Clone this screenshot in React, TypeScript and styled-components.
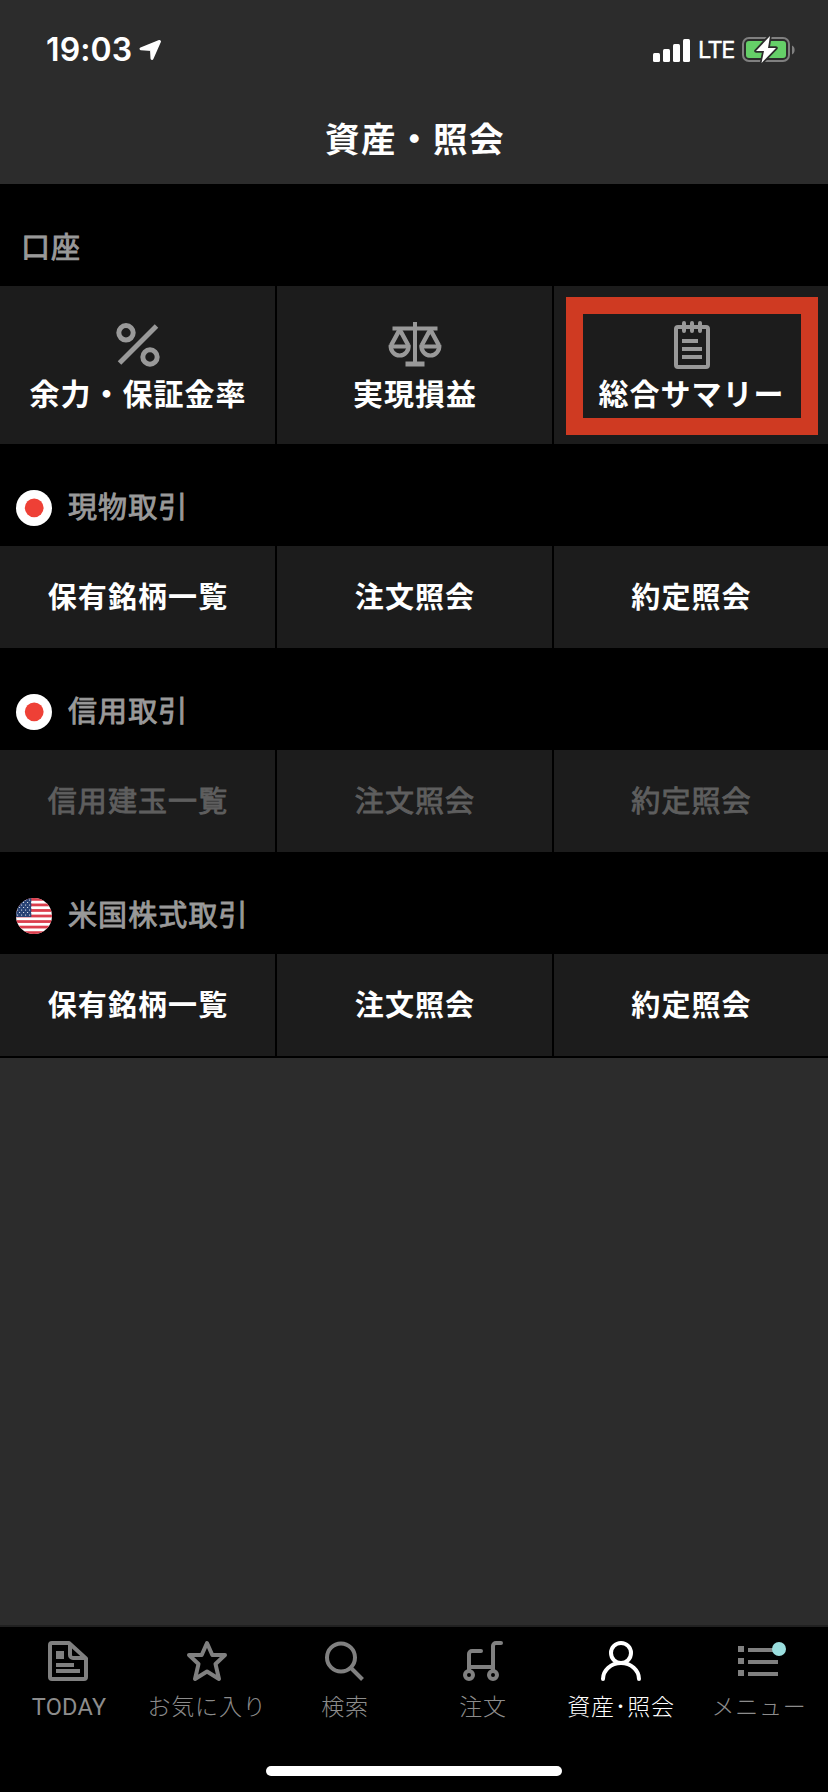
import React from "react";
import styled, { createGlobalStyle } from "styled-components";

const Global = createGlobalStyle`
  * { box-sizing: border-box; }
  body { margin: 0; background: #2c2c2c; font-family: "Noto Sans CJK JP", sans-serif; }
`;
const Screen = styled.div`
  width: 828px; height: 1792px; display: flex; flex-direction: column;
  background: #2c2c2c; color: #fff; overflow: hidden;
`;
const Header = styled.header`height: 184px; flex: none;`;
const StatusBar = styled.div`
  height: 97px; padding: 3px 33px 0 46px; display: flex; align-items: center; justify-content: space-between;
`;
const StatusGroup = styled.div`display: flex; align-items: center; height: 40px;`;
const Clock = styled.span`
  font: 600 32px/40px Inter, sans-serif; width: 92px; white-space: nowrap; letter-spacing: 0.1px;
`;
const Network = styled.span`
  font: 400 23.5px/42px Inter, sans-serif; width: 44px; letter-spacing: -1.5px;
  -webkit-text-stroke: 0.4px #fff;
`;
const Title = styled.h1`
  margin: 0; height: 80px; line-height: 80px; text-align: center; padding-left: 2px;
  font-size: 34.5px; font-weight: 700; letter-spacing: 1.5px;
`;
const Main = styled.main`background: #000; padding-bottom: 2px;`;
const SectionHead = styled.h2<{ $flag?: boolean }>`
  margin: 0; height: 102px; padding: 25px 0 0 ${p => (p.$flag ? 16 : 21)}px;
  display: flex; align-items: center; gap: 16px;
`;
const SectionTitle = styled.span`
  font-size: 29px; line-height: 44px; font-weight: 400; letter-spacing: 1.1px; color: #999;
  margin-bottom: 6px; -webkit-text-stroke: 0.9px #999;
`;
const Grid = styled.div<{ $tall?: boolean }>`
  display: grid; grid-template-columns: 275px 275px 274px; gap: 2px; height: ${p => (p.$tall ? 158 : 102)}px;
`;
const Cell = styled.button<{ $tall?: boolean; $off?: boolean }>`
  position: relative; border: 0; padding: ${p => (p.$tall ? "32px 0 0 1px" : "0 0 5px 1px")}; background: #1c1c1c;
  display: flex; flex-direction: column; align-items: center;
  justify-content: ${p => (p.$tall ? "flex-start" : "center")};
  font-family: inherit; font-size: ${p => (p.$tall ? 30 : 29)}px; line-height: 44px;
  font-weight: ${p => (p.$off ? 400 : 700)};
  -webkit-text-stroke: ${p => (p.$off ? "0.9px #5e5e5e" : "0")};
  letter-spacing: ${p => (p.$tall ? 1 : 1.1)}px; color: ${p => (p.$off ? "#5e5e5e" : "#fff")};
  white-space: nowrap;
`;
const Highlight = styled.i`
  position: absolute; left: 12px; top: 11px; width: 252px; height: 138px; border: 17px solid #cf3a22;
`;
const Spacer = styled.div`flex: 1; border-bottom: 2px solid #202020;`;
const TabBar = styled.nav`
  height: 165px; flex: none; background: #000; display: flex; flex-direction: column; align-items: center;
`;
const Tabs = styled.div`width: 100%; height: 139px; display: grid; grid-template-columns: repeat(6, 138px);`;
const Tab = styled.a<{ $on?: boolean }>`
  display: flex; flex-direction: column; align-items: center; padding-top: 10px;
  color: ${p => (p.$on ? "#fff" : "#808080")}; white-space: nowrap;
  svg { overflow: visible; }
`;
const TabLabel = styled.span<{ $on?: boolean; $latin?: boolean }>`
  font-size: 23px; line-height: 34px; margin-top: 3px; font-weight: 300; letter-spacing: 0.8px;
  color: ${p => (p.$on ? "#fff" : "#8c8c8c")};
  ${p => p.$latin && 'font-family: Roboto, sans-serif; font-size: 23.5px; margin-top: 5px; font-weight: 400; letter-spacing: 0.2px;'}
`;
const HomeIndicator = styled.div`width: 296px; height: 10px; border-radius: 5px; background: #fff;`;

const PercentIcon = () => (
  <svg width="48" height="52" viewBox="0 0 48 52" fill="none" stroke="#999" strokeWidth="5">
    <circle cx="12" cy="14.800" r="7.200" /><circle cx="36" cy="39" r="7.200" />
    <path d="M42.500 8 5.500 45" strokeWidth="5" />
  </svg>
);
const ScaleIcon = () => (
  <svg width="56" height="52" viewBox="0 0 56 52" fill="none" stroke="#999" strokeWidth="4">
    <path d="M28 4v42M5.500 10.500h45" strokeWidth="4" />
    <path d="M18.500 46h19" strokeWidth="5" />
    <path d="M12.700 11.500 4 27.500M12.700 11.500 21.400 27.500M43.300 11.500 34.600 27.500M43.300 11.500 52 27.500" strokeWidth="4.400" />
    <path d="M4 28.500h17.500M34.500 28.500H52" strokeWidth="4" />
    <path d="M3.700 27a9 9.500 0 1 0 17.900 0M34.400 27a9 9.500 0 1 0 17.900 0" strokeWidth="4.200" />
  </svg>
);
const NoteIcon = () => (
  <svg width="48" height="52" viewBox="0 0 48 52" fill="none" stroke="#999" strokeWidth="4">
    <rect x="8" y="9" width="32" height="40" rx="2" />
    <path d="M16 5v8M24 5v8M32 5v8" strokeLinecap="round" />
    <path d="M14 23h16M14 31h20M14 39h20" />
  </svg>
);
const JapanFlag = () => (
  <svg width="36" height="36" viewBox="0 0 36 36">
    <circle cx="18" cy="18" r="18" fill="#fff" /><circle cx="18.200" cy="17.800" r="9.400" fill="#ee4036" />
  </svg>
);
const UsFlag = () => (
  <svg width="36" height="36" viewBox="0 0 36 36">
    <clipPath id="round"><circle cx="18" cy="18" r="18" /></clipPath>
    <g clipPath="url(#round)">
      <path fill="#fff" d="M0 0h36v36H0z" />
      {[0, 1, 2, 3, 4, 5, 6].map(i => <rect key={i} y={i * 5.54} width="36" height="2.770" fill="#db3e4d" />)}
      <path fill="#294375" d="M0 0h15.300v19H0z" />
      {[0, 1, 2, 3, 4, 5, 6].flatMap(r =>
        [0, 1, 2, 3].map(c => <circle key={`${r}-${c}`} cx={1.6 + c * 4 + (r % 2) * 2} cy={2 + r * 2.5} r="0.600" fill="#fff" />)
      )}
    </g>
  </svg>
);
const TabSvg = ({ children }: { children: React.ReactNode }) => (
  <svg width="48" height="48" viewBox="0 0 48 48" fill="none" stroke="currentColor" strokeWidth="4" strokeLinejoin="round">{children}</svg>
);

const tabs = [
  { label: "TODAY", latin: true, art: (
    <g transform="translate(-1 0)">
      <path d="M25 6H8a2 2 0 0 0-2 2v32a2 2 0 0 0 2 2h32a2 2 0 0 0 2-2V21.500zM26 7v11a3 3 0 0 0 3 3h12" />
      <path d="M12 14h8v8h-8zM12 26h18v4H12zM12 32h24v4H12z" fill="currentColor" stroke="none" />
    </g>) },
  { label: "お気に入り", art: <path d="M24 6 29.300 18H42L32.500 27 36 42 24 34.500 12 42 15.500 27 6 18H18.700z" /> },
  { label: "検索", art: <><circle cx="20" cy="20.500" r="14" /><path d="M30.500 31.500 41.500 42.500" /></> },
  { label: "注文", art: (
    <><circle cx="10" cy="38" r="4" /><circle cx="34" cy="38" r="4" />
      <path d="M10 34V17a3 3 0 0 1 3-3h9M34 34V9a3 3 0 0 1 3-3h5" strokeLinecap="round" /><path d="M10 30h24" /></>) },
  { label: "資産･照会", on: true, art: <><circle cx="24" cy="16" r="10" /><path d="M6 42a18 16 0 0 1 36 0" strokeLinecap="round" /></> },
  { label: "メニュー", art: (
    <><path d="M3 12h6M3 24h6M3 36h6" strokeWidth="6" /><path d="M13 13h30M13 25h30M13 37h30" />
      <circle cx="44" cy="12" r="7" fill="#9adede" stroke="none" /></>) },
];

const markets = [
  { name: "現物取引", flag: <JapanFlag />, items: ["保有銘柄一覧", "注文照会", "約定照会"] },
  { name: "信用取引", flag: <JapanFlag />, off: true, items: ["信用建玉一覧", "注文照会", "約定照会"] },
  { name: "米国株式取引", flag: <UsFlag />, items: ["保有銘柄一覧", "注文照会", "約定照会"] },
];

export default function App() {
  return (
    <Screen>
      <Global />
      <Header>
        <StatusBar>
          <StatusGroup>
            <Clock>19:03</Clock>
            <svg width="24" height="24" viewBox="0 0 24 24" fill="#fff" stroke="#fff" strokeWidth="3" strokeLinejoin="round"><path d="M21.500 3.500 3 10.800l10.500.7.500 9z" /></svg>
          </StatusGroup>
          <StatusGroup>
            <svg width="45" height="26" viewBox="0 0 45 26" fill="#fff">
              <rect y="16" width="7" height="9" rx="1.500" /><rect x="10" y="12" width="7" height="13" rx="1.500" />
              <rect x="20" y="7" width="7" height="18" rx="1.500" /><rect x="30" y="2" width="7" height="23" rx="1.500" />
            </svg>
            <Network>LTE</Network>
            <svg width="53" height="28" viewBox="0 0 53 28" fill="none">
              <rect x="1" y="2" width="46" height="23" rx="6" stroke="#808080" strokeWidth="2" />
              <rect x="4" y="5" width="40" height="17" rx="3" fill="#65cf68" />
              <path d="M50 9.500c3.500 1 3.500 8 0 9z" fill="#808080" />
              <path d="M28 0 14 15h8L19.500 27 34 12H26z" fill="#fff" stroke="#2c2c2c" strokeWidth="3.500" strokeLinejoin="round" paintOrder="stroke" />
            </svg>
          </StatusGroup>
        </StatusBar>
        <Title>資産・照会</Title>
      </Header>
      <Main>
        <SectionHead><SectionTitle>口座</SectionTitle></SectionHead>
        <Grid $tall>
          <Cell $tall><PercentIcon />余力・保証金率</Cell>
          <Cell $tall><ScaleIcon />実現損益</Cell>
          <Cell $tall><NoteIcon />総合サマリー<Highlight /></Cell>
        </Grid>
        {markets.map(m => (
          <React.Fragment key={m.name}>
            <SectionHead $flag>{m.flag}<SectionTitle>{m.name}</SectionTitle></SectionHead>
            <Grid>{m.items.map(t => <Cell key={t} $off={m.off}>{t}</Cell>)}</Grid>
          </React.Fragment>
        ))}
      </Main>
      <Spacer />
      <TabBar>
        <Tabs>
          {tabs.map(t => (
            <Tab key={t.label} $on={t.on}>
              <TabSvg>{t.art}</TabSvg>
              <TabLabel $on={t.on} $latin={t.latin}>{t.label}</TabLabel>
            </Tab>
          ))}
        </Tabs>
        <HomeIndicator />
      </TabBar>
    </Screen>
  );
}
